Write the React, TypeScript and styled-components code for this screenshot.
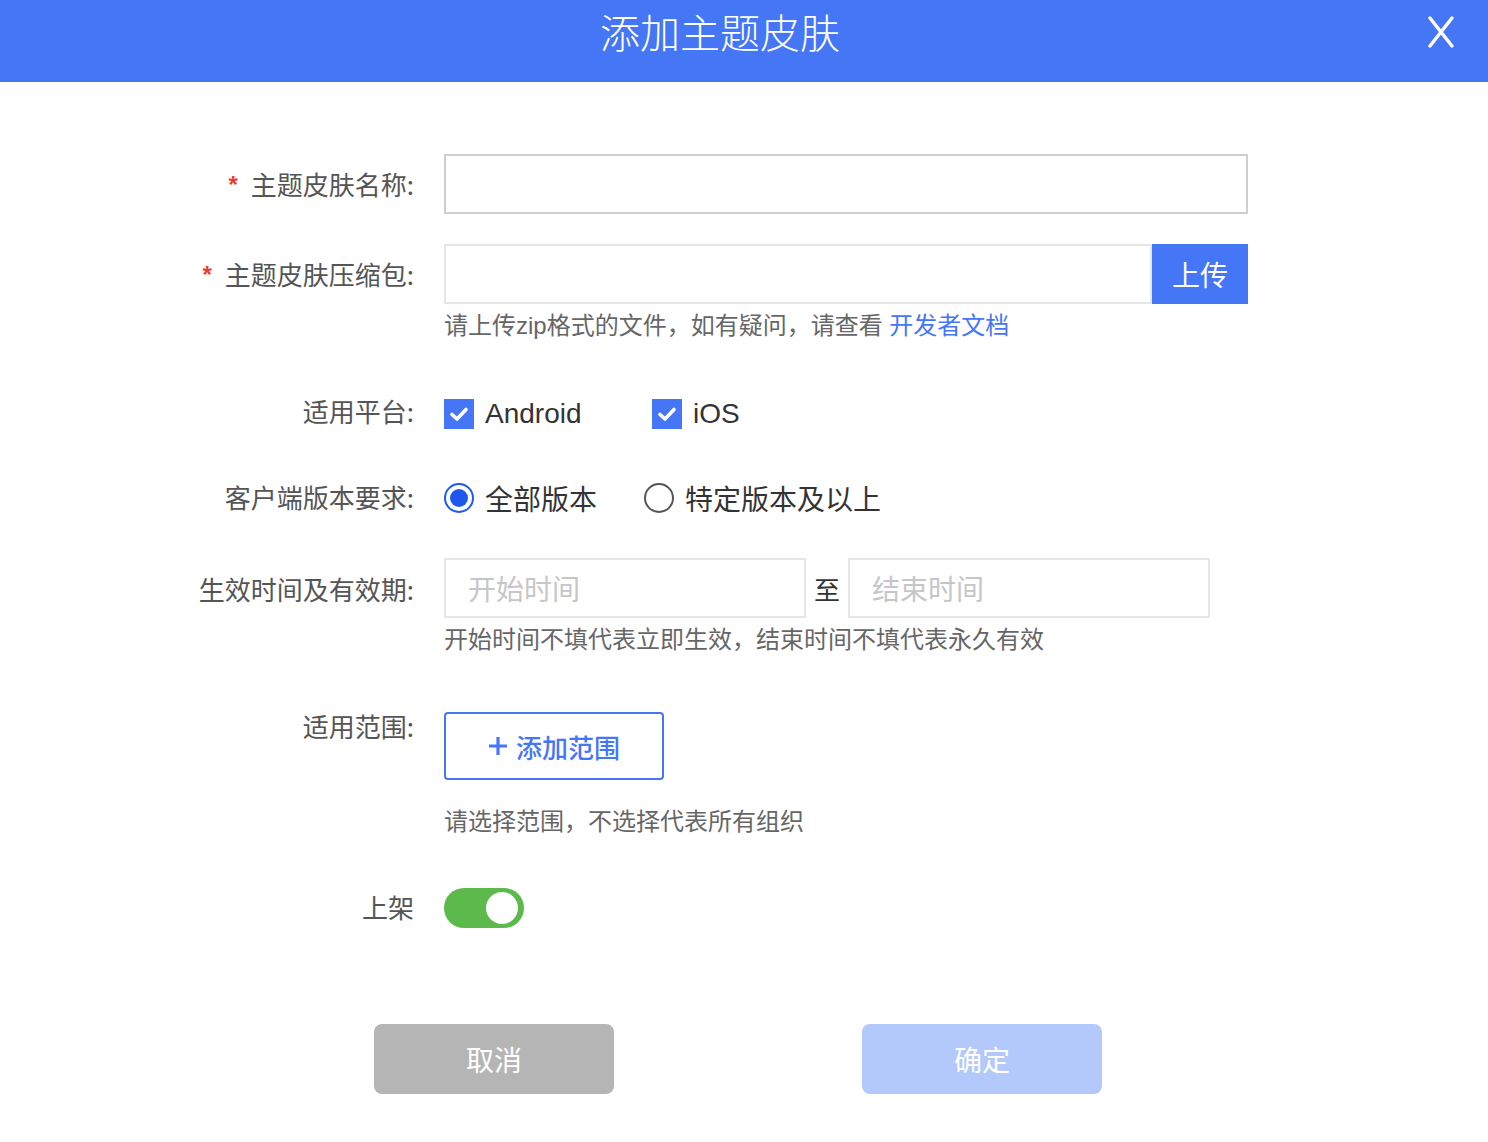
import React from "react";
import styled, { createGlobalStyle } from "styled-components";

const Global = createGlobalStyle`
  html, body { margin: 0; padding: 0; background: #fff; }
  body { font-family: "Liberation Sans", "Noto Sans CJK SC", "Noto Sans", sans-serif; }
  * { box-sizing: border-box; }
`;

const BLUE = "#4476f6";

const Page = styled.div`
  width: 1488px;
  min-height: 1142px;
  background: #fff;
`;

const Header = styled.header`
  position: relative;
  height: 82px;
  background: ${BLUE};
  display: flex;
  justify-content: center;
  padding-right: 48px;
`;

const Title = styled.h1`
  margin: 0;
  font-family: "Noto Sans CJK SC", sans-serif;
  font-weight: 300;
  font-size: 40px;
  line-height: 62px;
  color: #fff;
`;

const Close = styled.button`
  position: absolute;
  right: 34px;
  top: 16px;
  width: 26px;
  height: 32px;
  padding: 0;
  border: none;
  background: transparent;
  cursor: pointer;
  display: flex;
`;

const Form = styled.div`
  display: flex;
  flex-direction: column;
`;

const Row = styled.div<{ $mt: number }>`
  display: flex;
  align-items: flex-start;
  margin-top: ${(p) => p.$mt}px;
`;

const Label = styled.div<{ $h: number }>`
  width: 414px;
  height: ${(p) => p.$h}px;
  flex: none;
  text-align: right;
  font-family: "Noto Sans CJK SC", sans-serif;
  font-size: 26px;
  line-height: ${(p) => p.$h}px;
  color: #555;
`;

const Star = styled.span`
  display: inline-block;
  color: #e8402f;
  font-size: 24px;
  line-height: 1;
  font-weight: 700;
  margin-right: 13px;
  font-family: "Liberation Sans", sans-serif;
  vertical-align: 2px;
`;

const Control = styled.div`
  margin-left: 30px;
  display: flex;
  flex-direction: column;
`;

const TextInput = styled.input<{ $w: number; $strong?: boolean }>`
  width: ${(p) => p.$w}px;
  height: 60px;
  border: 2px solid ${(p) => (p.$strong ? "#cfcfcf" : "#e6e6e6")};
  border-radius: 0;
  outline: none;
  padding: 0 22px;
  font-family: "Noto Sans CJK SC", sans-serif;
  font-size: 28px;
  color: #333;
  background: #fff;
  &::placeholder { color: #c6c6c6; }
`;

const InputGroup = styled.div`
  display: flex;
  align-items: center;
`;

const UploadButton = styled.button`
  width: 96px;
  height: 60px;
  border: none;
  background: ${BLUE};
  color: #fff;
  font-family: "Noto Sans CJK SC", sans-serif;
  font-size: 28px;
  padding: 0;
`;

const Hint = styled.div<{ $mt: number }>`
  margin-top: ${(p) => p.$mt}px;
  font-family: "Liberation Sans", "Noto Sans CJK SC", sans-serif;
  font-size: 24px;
  line-height: 36px;
  color: #666;
  white-space: nowrap;
`;

const Link = styled.a`
  color: ${BLUE};
  text-decoration: none;
`;

const Options = styled.div`
  display: flex;
  align-items: center;
  height: 40px;
`;

const Option = styled.label<{ $w: number }>`
  display: flex;
  align-items: center;
  width: ${(p) => p.$w}px;
  font-family: "Liberation Sans", "Noto Sans CJK SC", sans-serif;
  font-size: 28px;
  color: #333;
  white-space: nowrap;
`;

const CheckBox = styled.span`
  width: 30px;
  height: 30px;
  background: ${BLUE};
  display: flex;
  align-items: center;
  justify-content: center;
  margin-right: 11px;
  flex: none;
`;

const Radio = styled.span<{ $on?: boolean }>`
  width: 30px;
  height: 30px;
  border-radius: 50%;
  border: 2px solid ${(p) => (p.$on ? "#1f5af0" : "#555")};
  display: flex;
  align-items: center;
  justify-content: center;
  margin-right: 11px;
  flex: none;
  &::after {
    content: "";
    display: ${(p) => (p.$on ? "block" : "none")};
    width: 18px;
    height: 18px;
    border-radius: 50%;
    background: #1f57ec;
  }
`;

const To = styled.span`
  width: 42px;
  text-align: center;
  font-family: "Noto Sans CJK SC", sans-serif;
  font-size: 26px;
  color: #333;
`;

const AddButton = styled.button`
  width: 220px;
  height: 68px;
  border: 2px solid ${BLUE};
  border-radius: 4px;
  background: #fff;
  color: ${BLUE};
  font-family: "Noto Sans CJK SC", sans-serif;
  font-size: 26px;
  font-weight: 500;
  display: flex;
  align-items: center;
  justify-content: center;
  gap: 8px;
  padding: 0;
`;

const Toggle = styled.span`
  position: relative;
  width: 80px;
  height: 40px;
  border-radius: 20px;
  background: #5cb94b;
  display: block;
  &::after {
    content: "";
    position: absolute;
    right: 6px;
    top: 4px;
    width: 32px;
    height: 32px;
    border-radius: 50%;
    background: #fff;
  }
`;

const Footer = styled.div`
  margin-top: 96px;
  display: flex;
  justify-content: center;
  gap: 248px;
  padding-right: 12px;
`;

const FootButton = styled.button<{ $bg: string }>`
  width: 240px;
  height: 70px;
  border: none;
  border-radius: 8px;
  background: ${(p) => p.$bg};
  color: #fff;
  font-family: "Noto Sans CJK SC", sans-serif;
  font-size: 28px;
  padding: 0;
`;

const Check = () => (
  <svg width="20" height="16" viewBox="0 0 20 16">
    <path d="M3 8.5 L8 13 L17 3.5" fill="none" stroke="#fff" strokeWidth="3.6" strokeLinecap="round" strokeLinejoin="round" />
  </svg>
);

export default function App() {
  return (
    <Page>
      <Global />
      <Header>
        <Title>添加主题皮肤</Title>
        <Close aria-label="close">
          <svg width="26" height="32" viewBox="0 0 26 32">
            <path d="M2 2 L24 30 M24 2 L2 30" stroke="#fff" strokeWidth="3.4" strokeLinecap="round" />
          </svg>
        </Close>
      </Header>
      <Form>
        <Row $mt={72}>
          <Label $h={60}><Star>*</Star>主题皮肤名称:</Label>
          <Control>
            <TextInput $w={804} $strong />
          </Control>
        </Row>
        <Row $mt={30}>
          <Label $h={60}><Star>*</Star>主题皮肤压缩包:</Label>
          <Control>
            <InputGroup>
              <TextInput $w={708} />
              <UploadButton>上传</UploadButton>
            </InputGroup>
            <Hint $mt={4}>请上传zip格式的文件，如有疑问，请查看 <Link>开发者文档</Link></Hint>
          </Control>
        </Row>
        <Row $mt={50}>
          <Label $h={34}>适用平台:</Label>
          <Control>
            <Options>
              <Option $w={208}><CheckBox><Check /></CheckBox>Android</Option>
              <Option $w={120}><CheckBox><Check /></CheckBox>iOS</Option>
            </Options>
          </Control>
        </Row>
        <Row $mt={44}>
          <Label $h={38}>客户端版本要求:</Label>
          <Control>
            <Options>
              <Option $w={200}><Radio $on />全部版本</Option>
              <Option $w={260}><Radio />特定版本及以上</Option>
            </Options>
          </Control>
        </Row>
        <Row $mt={40}>
          <Label $h={62}>生效时间及有效期:</Label>
          <Control>
            <InputGroup>
              <TextInput $w={362} placeholder="开始时间" />
              <To>至</To>
              <TextInput $w={362} placeholder="结束时间" />
            </InputGroup>
            <Hint $mt={4}>开始时间不填代表立即生效，结束时间不填代表永久有效</Hint>
          </Control>
        </Row>
        <Row $mt={54}>
          <Label $h={28}>适用范围:</Label>
          <Control>
            <AddButton>
              <svg width="20" height="20" viewBox="0 0 20 20">
                <path d="M10 1 V19 M1 10 H19" stroke={BLUE} strokeWidth="3.2" />
              </svg>
              添加范围
            </AddButton>
            <Hint $mt={24}>请选择范围，不选择代表所有组织</Hint>
          </Control>
        </Row>
        <Row $mt={48}>
          <Label $h={38}>上架</Label>
          <Control>
            <Toggle />
          </Control>
        </Row>
        <Footer>
          <FootButton $bg="#b5b5b5">取消</FootButton>
          <FootButton $bg="#b3c8fb">确定</FootButton>
        </Footer>
      </Form>
    </Page>
  );
}
